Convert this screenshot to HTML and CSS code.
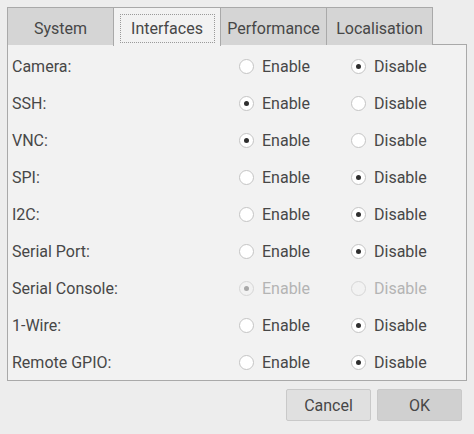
FILE: index.html
```html
<!DOCTYPE html>
<html>
<head>
<meta charset="utf-8">
<link rel="stylesheet" href="styles.css">
</head>
<body>
<div class="dialog">
  <div class="tabs">
    <div class="tab">System</div>
    <div class="tab active"><span class="focus">Interfaces</span></div>
    <div class="tab">Performance</div>
    <div class="tab">Localisation</div>
  </div>
  <div class="panel">
    <div class="row"><span class="label">Camera:</span><label class="opt"><span class="radio"></span>Enable</label><label class="opt"><span class="radio on"></span>Disable</label></div>
    <div class="row"><span class="label">SSH:</span><label class="opt"><span class="radio on"></span>Enable</label><label class="opt"><span class="radio"></span>Disable</label></div>
    <div class="row"><span class="label">VNC:</span><label class="opt"><span class="radio on"></span>Enable</label><label class="opt"><span class="radio"></span>Disable</label></div>
    <div class="row"><span class="label">SPI:</span><label class="opt"><span class="radio"></span>Enable</label><label class="opt"><span class="radio on"></span>Disable</label></div>
    <div class="row"><span class="label">I2C:</span><label class="opt"><span class="radio"></span>Enable</label><label class="opt"><span class="radio on"></span>Disable</label></div>
    <div class="row"><span class="label">Serial Port:</span><label class="opt"><span class="radio"></span>Enable</label><label class="opt"><span class="radio on"></span>Disable</label></div>
    <div class="row"><span class="label">Serial Console:</span><label class="opt disabled"><span class="radio on"></span>Enable</label><label class="opt disabled"><span class="radio"></span>Disable</label></div>
    <div class="row"><span class="label">1-Wire:</span><label class="opt"><span class="radio"></span>Enable</label><label class="opt"><span class="radio on"></span>Disable</label></div>
    <div class="row"><span class="label">Remote GPIO:</span><label class="opt"><span class="radio"></span>Enable</label><label class="opt"><span class="radio on"></span>Disable</label></div>
  </div>
  <div class="buttons">
    <button class="btn">Cancel</button>
    <button class="btn default">OK</button>
  </div>
</div>
</body>
</html>
```
FILE: styles.css
```css
html, body {
  margin: 0;
  padding: 0;
  background: #ededed;
}
body {
  font-family: Roboto, "Liberation Sans", sans-serif;
  font-size: 16px;
  color: #474747;
}
.dialog {
  padding: 7px 7px 0 7px;
  width: 460px;
}
.tabs {
  display: flex;
  height: 38px;
  margin-bottom: -1px;
}
.tab {
  box-sizing: border-box;
  height: 38px;
  border: 1px solid #a9a9a9;
  border-bottom: none;
  background: #d5d5d5;
  display: flex;
  align-items: center;
  justify-content: center;
  padding-top: 4px;
  margin-right: -1px;
}
.tab:nth-child(1) { width: 107px; }
.tab:nth-child(2) { width: 108px; }
.tab:nth-child(3) { width: 107px; }
.tab:nth-child(4) { width: 107px; }
.tab.active {
  background: #f2f2f2;
  height: 39px;
  position: relative;
  z-index: 1;
  padding-top: 4px;
}
.focus {
  box-sizing: border-box;
  width: 95px;
  height: 29px;
  border: 1px dotted #9a9a9a;
  display: flex;
  align-items: center;
  justify-content: center;
  margin-top: -2px;
}
.panel {
  box-sizing: border-box;
  width: 460px;
  height: 337px;
  border: 1px solid #a9a9a9;
  background: #f2f2f2;
  padding: 3px 0 0 4px;
}
.row {
  display: flex;
  align-items: center;
  height: 37px;
}
.label {
  width: 227px;
}
.opt {
  display: flex;
  align-items: center;
  width: 112px;
}
.radio {
  box-sizing: border-box;
  width: 15px;
  height: 15px;
  border-radius: 50%;
  border: 1px solid #c4c4c4;
  background: #ffffff;
  margin-right: 8px;
  display: flex;
  align-items: center;
  justify-content: center;
}
.radio.on::after {
  content: "";
  width: 5px;
  height: 5px;
  border-radius: 50%;
  background: #2f2f2f;
}
.opt.disabled {
  color: #b4b4b4;
}
.opt.disabled .radio {
  border-color: #d6d6d6;
  background: #f2f2f2;
}
.opt.disabled .radio.on::after {
  background: #a8a8a8;
}
.buttons {
  display: flex;
  justify-content: flex-end;
  gap: 6px;
  padding: 8px 5px 0 0;
}
.btn {
  box-sizing: border-box;
  width: 85px;
  height: 32px;
  font-family: Roboto, "Liberation Sans", sans-serif;
  font-size: 16px;
  color: #474747;
  background: #e0e0e0;
  border: 1px solid #c9c9c9;
  border-radius: 2px;
  padding: 0;
}
.btn.default {
  background: #d0d0d0;
}
```
